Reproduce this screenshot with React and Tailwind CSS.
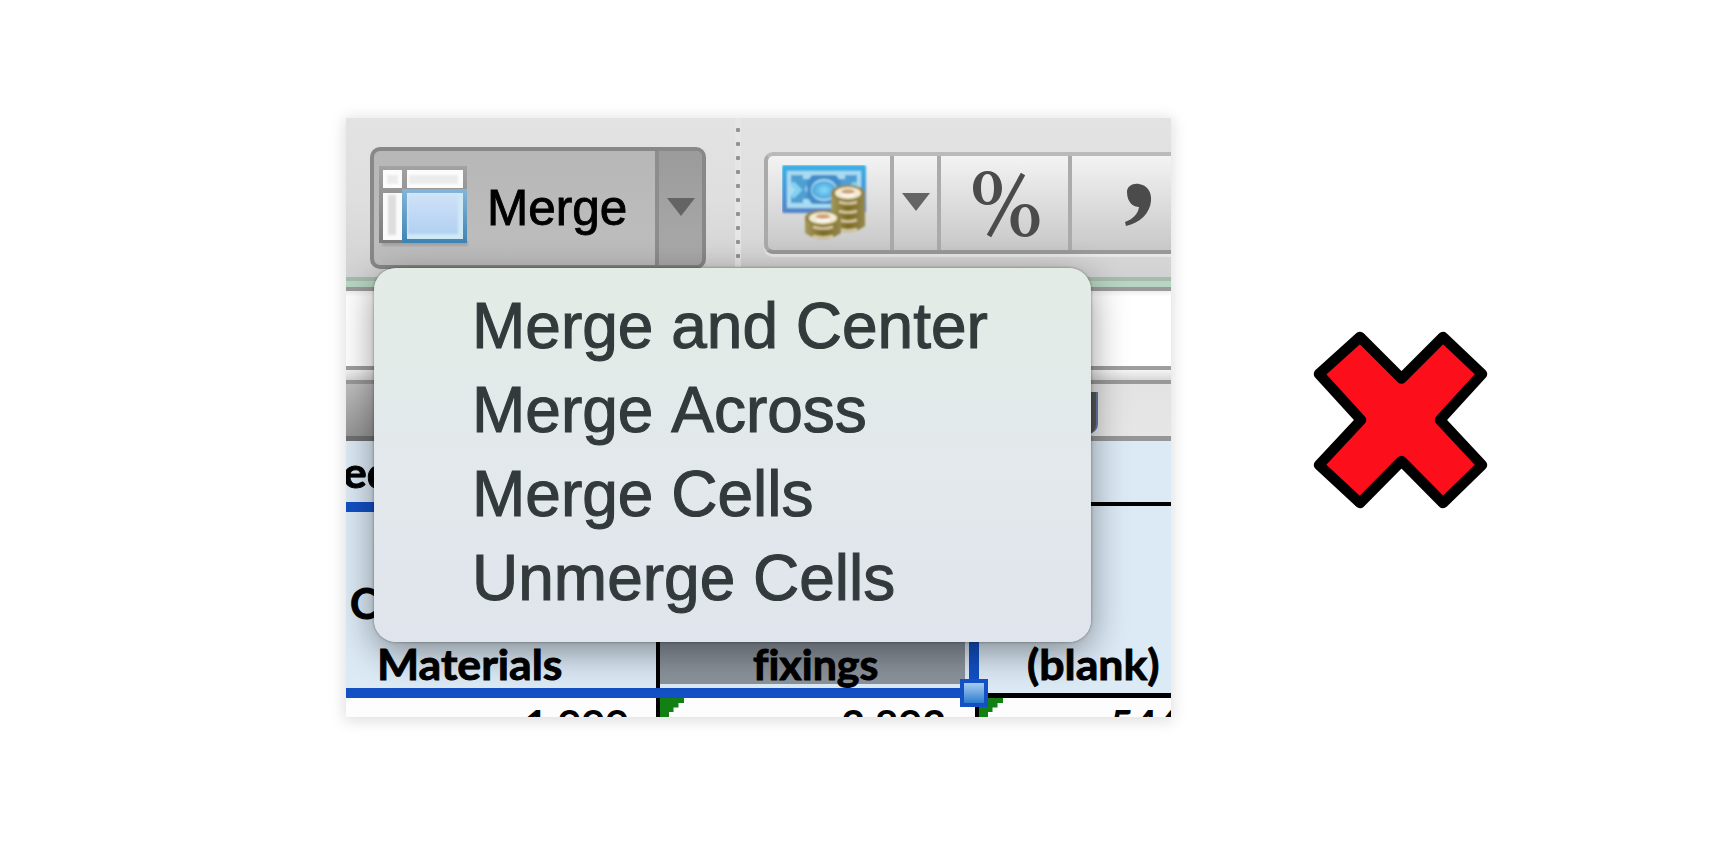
const ITEMS = ["Merge and Center", "Merge Across", "Merge Cells", "Unmerge Cells"];

function MergeIcon() {
  return (
    <svg width="92" height="86" viewBox="0 0 92 86" className="block shrink-0">
      <defs>
        <linearGradient id="mf" x1="0" y1="0" x2="0" y2="1"><stop offset="0" stopColor="#a2a2a2" /><stop offset="1" stopColor="#7c7c7c" /></linearGradient>
        <linearGradient id="mb" x1="0" y1="0" x2="0" y2="1"><stop offset="0" stopColor="#cfe2f8" /><stop offset="1" stopColor="#b2d0f2" /></linearGradient>
        <linearGradient id="ms" x1="0" y1="0" x2="0" y2="1"><stop offset="0" stopColor="#84b5d8" /><stop offset="1" stopColor="#3f83b3" /></linearGradient>
        <filter id="soft"><feGaussianBlur stdDeviation="1.2" /></filter>
      </defs>
      <rect x="3" y="75" width="86" height="5" fill="#888" opacity=".45" filter="url(#soft)" />
      <rect x="0" y="0" width="88" height="77" fill="url(#mf)" />
      <rect x="4" y="4" width="19" height="18" fill="#fcfcfc" />
      <rect x="8" y="9" width="11" height="9" fill="#ececec" filter="url(#soft)" />
      <rect x="28" y="4" width="56" height="18" fill="#fcfcfc" />
      <rect x="30" y="9" width="49" height="9" fill="#ececec" filter="url(#soft)" />
      <rect x="4" y="27" width="19" height="47" fill="#fafafa" />
      <rect x="9" y="29" width="8" height="40" fill="#dedede" filter="url(#soft)" />
      <rect x="23" y="23" width="65" height="54" fill="url(#ms)" />
      <rect x="28" y="27" width="56" height="46" fill="#cfe9f6" />
      <rect x="29" y="28" width="50" height="40" fill="url(#mb)" filter="url(#soft)" />
    </svg>
  );
}

function Arrow({ className }) {
  return <svg width="28" height="18" viewBox="0 0 28 18" className={className}><path d="M0 0H28L14 18Z" fill="#646464" /></svg>;
}

function Coins({ x, y, n, w }) {
  const r = w / 2;
  return (
    <g transform={`translate(${x} ${y})`}>
      <path d={`M0 6V${n * 9 + 4}Q${r} ${n * 9 + 16} ${w} ${n * 9 + 4}V6Z`} fill="url(#coin)" />
      {Array.from({ length: n }, (_, i) => (
        <path key={i} d={`M8 ${i * 9 + 16}Q${r} ${i * 9 + 19} ${w - 8} ${i * 9 + 16}`} stroke="#d9c9a0" strokeWidth="2.500" fill="none" />
      ))}
      <ellipse cx={r} cy="7" rx={r} ry="8" fill="#928443" />
      <ellipse cx={r} cy="7" rx={r - 4} ry="6" fill="#f3ead2" />
      <ellipse cx={r} cy="5.500" rx={r / 2.6} ry="2.500" fill="#cfa377" />
      <path d={`M${r - 6} 9h12`} stroke="#fff" strokeWidth="2" />
    </g>
  );
}

function MoneyIcon() {
  return (
    <svg width="88" height="80" viewBox="0 0 88 80" className="block">
      <defs>
        <linearGradient id="note" x1="0" y1="0" x2="0" y2="1"><stop offset="0" stopColor="#38b1e6" /><stop offset="1" stopColor="#5583c8" /></linearGradient>
        <linearGradient id="coin"><stop offset="0" stopColor="#a59a5e" /><stop offset=".5" stopColor="#7a6a22" /><stop offset="1" stopColor="#94884c" /></linearGradient>
        <radialGradient id="mid"><stop offset="0" stopColor="#86dbf8" /><stop offset="1" stopColor="#4aa3dc" /></radialGradient>
        <filter id="fuzz"><feGaussianBlur stdDeviation="1" /></filter>
      </defs>
      <g filter="url(#fuzz)">
        <rect x="0" y="0" width="84" height="48" rx="2" fill="url(#note)" />
        <rect x="5" y="6" width="74" height="37" fill="#a9dcf3" />
        <path d="M9 10H21V14H28L23 24L28 34H21V38H9V31L14 24L9 17Z" fill="#4f9fd2" />
        <path d="M75 10H63V14H56L61 24L56 34H63V38H75V31L70 24L75 17Z" fill="#4f9fd2" />
        <path d="M10 18L17 25L10 32M74 18L67 25L74 32" stroke="#83d2f2" strokeWidth="5" fill="none" />
        <path d="M30 10H54L59 17V32L54 39H30L25 32V17Z" fill="#3f8cc8" />
        <ellipse cx="42" cy="25" rx="13" ry="11" fill="#a9dcf3" />
        <ellipse cx="42" cy="25" rx="12" ry="9" fill="url(#mid)" />
        <Coins x={49} y={21} n={4} w={34} />
        <Coins x={23} y={46} n={2} w={36} />
      </g>
    </svg>
  );
}

function Corner() {
  return <svg width="24" height="19" viewBox="0 0 24 19" className="absolute left-0 top-0"><path d="M0 0H24V5H18.500V9.500H13.500V14H9V19H0Z" fill="#128012" /></svg>;
}

export default function App() {
  return (
    <main className="relative flex h-[866px] w-[1710px] overflow-hidden bg-white pt-[118px] pl-[346px] font-['Liberation_Sans',sans-serif] text-black">
      <section className="relative h-[599px] w-[825px] shrink-0 shadow-[0_2px_14px_2px_rgba(0,0,0,0.13)]">
        <div className="flex h-full w-full flex-col overflow-hidden bg-white">
          <header className="flex h-[159px] shrink-0 items-start bg-linear-to-b from-[#e3e3e3] via-[#dfdfdf] to-[#d2d2d2]">
            <div className="mt-[29px] ml-[24px] flex h-[122px] w-[336px] shrink-0 overflow-hidden rounded-[10px] border-[4px] border-[#888] bg-linear-to-b from-[#b7b7b7] to-[#bebebe]">
              <div className="flex w-[281px] shrink-0 pt-[15px] pl-[5px]">
                <MergeIcon />
                <span className="mt-[14px] ml-[16px] text-[49.500px] leading-[56px] [-webkit-text-stroke:0.9px_#000]">Merge</span>
              </div>
              <div className="flex flex-1 justify-center border-l-[4px] border-[#8d8d8d] bg-linear-to-b from-[#9b9b9b] to-[#aaaaaa] pt-[47px]">
                <Arrow />
              </div>
            </div>
            <div className="ml-[29px] flex h-[149px] w-[6px] shrink-0 flex-col items-center gap-[10px] bg-[#e6e6e6] pt-[10px]">
              {Array.from({ length: 10 }, (_, i) => <i key={i} className="block size-[4px] shrink-0 rounded-[1px] bg-[#939393]" />)}
            </div>
            <div className="mt-[34px] ml-[23px] flex h-[102px] w-[420px] shrink-0 rounded-l-[9px] border-[4px] border-t-[#bababa] border-r-[#aaa] border-b-[#999] border-l-[#aaa] bg-linear-to-b from-[#f3f3f3] to-[#c8c8c8] shadow-[0_3px_1px_rgba(255,255,255,0.45)]">
              <div className="w-[126px] shrink-0 border-r-[4px] border-[#ababab] pt-[9px] pl-[14px]"><MoneyIcon /></div>
              <div className="flex w-[47px] shrink-0 justify-center border-r-[4px] border-[#ababab] pt-[37px]"><Arrow /></div>
              <div className="flex w-[131px] shrink-0 items-start justify-center border-r-[4px] border-[#ababab] pt-[12px]">
                <svg width="70" height="74" viewBox="0 0 70 74" className="block">
                  <path d="M53 6L19 68" stroke="#4b4b4b" strokeWidth="5" />
                  <g fill="#4b4b4b" fillRule="evenodd">
                    <path d="M17.500 3C26 3 32 10 32 20S26 37 17.500 37S3 30 3 20S9 3 17.500 3ZM17.500 6C13 6 11 12 11 20S13 34 17.500 34S24 28 24 20S22 6 17.500 6Z" />
                    <path d="M55 36C63.500 36 69.500 43 69.500 52.500S63.500 69 55 69S40.500 62 40.500 52.500S46.500 36 55 36ZM55 39C50.500 39 48.500 45 48.500 52.500S50.500 66 55 66S61.500 60 61.500 52.500S59.500 39 55 39Z" />
                  </g>
                </svg>
              </div>
              <svg width="90" height="90" viewBox="0 0 90 90" className="block shrink-0"><path d="M55 36C55 30 61 27 67 28C75 29 80 36 79 45C78 57 68 67 54 70L53 66C61 63 66 58 67 51C62 51 55 47 55 36Z" fill="#4b4b4b" /></svg>
            </div>
          </header>
          <div className="h-[4px] shrink-0 bg-[#a4bcab]" />
          <div className="h-[6px] shrink-0 bg-[#b8d4c2]" />
          <div className="h-[4px] shrink-0 bg-[#9a9a9a]" />
          <div className="h-[75px] shrink-0 bg-linear-to-b from-[#efefef] via-white via-8% to-white" />
          <div className="h-[4px] shrink-0 bg-[#9e9e9e]" />
          <div className="h-[10px] shrink-0 bg-linear-to-b from-[#f5f5f5] to-[#d8d8d8]" />
          <div className="h-[4px] shrink-0 bg-[#999]" />
          <div className="flex h-[52px] shrink-0">
            <div className="w-[300px] bg-linear-to-b from-[#bfbfbf] to-[#969696]" />
            <div className="flex flex-1 items-start bg-linear-to-b from-[#e3e3e3] to-[#e6e6e6] pl-[422px]">
              <span className="mt-[8px] h-[42px] w-[30px] rounded-br-[10px] border-r-2 border-[#6877a8] bg-[#575757]" />
            </div>
          </div>
          <div className="h-[5px] shrink-0 bg-linear-to-r from-[#707070] from-10% to-[#969696] to-90%" />
          <div className="flex h-[61px] shrink-0 items-start bg-[#dceaf6] font-['Lato',sans-serif] text-[42px] leading-[50px] font-bold [-webkit-text-stroke:0.9px_#000]">
            <span className="-ml-[3px] mt-[6px] inline-block origin-left scale-x-[1.06]">ed</span>
          </div>
          <div className="flex h-[10px] shrink-0 bg-[#dceaf6]"><div className="w-[400px] bg-[#1250c4]" /><div className="h-[4px] flex-1 bg-black" /></div>
          <div className="h-[129px] shrink-0 bg-[#dceaf6] pt-[66px] pl-[4px] font-['Lato',sans-serif] text-[42px] leading-[50px] font-bold [-webkit-text-stroke:0.9px_#000]">C</div>
          <div className="flex h-[47px] shrink-0 bg-[#dceaf6] font-['Lato',sans-serif] text-[41.500px] leading-[50px] font-bold [-webkit-text-stroke:0.9px_#000]">
            <div className="w-[314px] shrink-0 border-r-[4px] border-black pl-[31px]"><span className="inline-block origin-left scale-x-[1.075] -translate-y-[2px]">Materials</span></div>
            <div className="h-[43px] w-[309px] shrink-0 border-r-[4px] border-[#dceaf6] bg-[#8a929b] pl-[93px]"><span className="inline-block origin-left scale-x-[1.035] -translate-y-[2px] [font-variant-ligatures:none]">fixings</span></div>
            <div className="w-[10px] shrink-0 bg-[#1250c4]" />
            <div className="pl-[48px]"><span className="inline-block origin-left scale-x-[1.075] -translate-y-[2px]">(blank)</span></div>
          </div>
          <div className="flex h-[10px] shrink-0 bg-[#dceaf6]"><div className="w-[630px] bg-[#1250c4]" /><div className="mt-[5px] h-[5px] flex-1 bg-black" /></div>
          <div className="flex h-[19px] shrink-0 overflow-hidden bg-[#fdfdfd] font-['Lato',sans-serif] text-[41px] leading-[50px] font-bold">
            <div className="w-[314px] shrink-0 border-r-[4px] border-black pr-[27px] text-right"><span className="inline-block translate-y-px">1,999</span></div>
            <div className="relative w-[319px] shrink-0 border-r-[4px] border-black pr-[29px] text-right"><Corner /><span className="inline-block translate-y-px">2,892</span></div>
            <div className="relative flex-1 pl-[131px]"><Corner /><span className="inline-block translate-y-px">546</span></div>
          </div>
        </div>
        <div className="absolute inset-0 overflow-hidden">
          <nav className="absolute top-[150px] left-[28px] flex h-[374px] w-[717px] flex-col rounded-[22px] bg-linear-to-b from-[#e2ece5] via-[#e3e9eb] via-45% to-[#e0e5ed] pt-[16px] pl-[98px] shadow-[0_10px_36px_rgba(0,0,0,0.42),0_0_3px_rgba(0,0,0,0.4)]">
            {ITEMS.map((t) => <span key={t} className="h-[84px] shrink-0 text-[64px] leading-[84px] whitespace-nowrap text-[#333a3c] [font-kerning:none] [-webkit-text-stroke:1.1px_#333a3c]">{t}</span>)}
          </nav>
          <div className="absolute top-[561px] left-[614px] size-[28px] border-[4px] border-[#1250c4] bg-linear-to-b from-[#a6cdf0] to-[#2a7cd0]" />
        </div>
      </section>
      <svg width="180" height="184" viewBox="0 0 180 184" className="mt-[210px] ml-[140px] block shrink-0">
        <path d="M63 9L104.500 50.500L146 9L185 46L143 92L185 137L146 175L104.500 133L63 175L22 137L64 92L22 46Z" transform="translate(-14 0)" fill="#fc0f1b" stroke="#000" strokeWidth="10.500" strokeLinejoin="round" />
      </svg>
    </main>
  );
}
